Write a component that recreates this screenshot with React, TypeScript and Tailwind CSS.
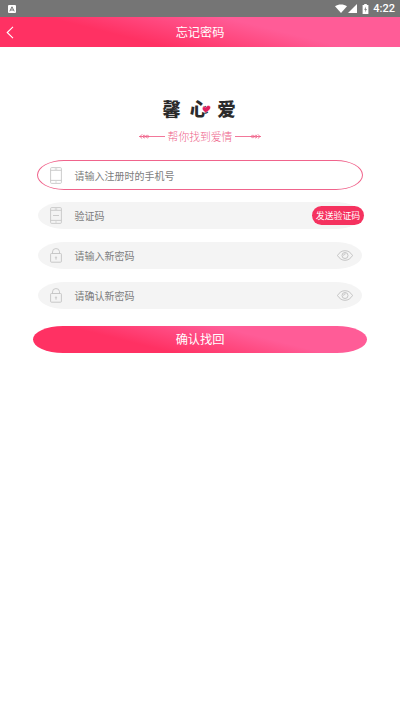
import type { ReactNode } from "react";

const gradient = "bg-[linear-gradient(14deg,#ff3163_32%,#ff5c97_66%)]";

function StatusBar() {
  return (
    <div className="h-[17px] bg-[#757575] flex items-center justify-between pl-2 pr-[5px] text-white">
      <svg width="8" height="8" viewBox="0 0 8 8">
        <rect width="8" height="8" rx="1" fill="#fff" />
        <path d="M1.8 6.3 4 1.8l2.2 4.5M2.8 5h2.4" fill="none" stroke="#757575" strokeWidth="1" />
      </svg>
      <div className="flex items-center">
        <svg width="12" height="9" viewBox="0 0 12 10" fill="#fff" preserveAspectRatio="none">
          <path d="M0 2.6C3.4-.2 8.6-.2 12 2.6L6 10Z" />
        </svg>
        <svg className="ml-px" width="9" height="9" viewBox="0 0 9 9" fill="#fff">
          <path d="M9 0V9H0Z" />
        </svg>
        <svg className="ml-[5px]" width="7" height="10" viewBox="0 0 7 10">
          <path d="M2.2 0h2.6v1H6.4v9H.6V1h1.6Z" fill="#fff" />
          <path d="M4 2.4 2.2 5.8h1.3L3 8.4l1.9-3.5H3.7Z" fill="#757575" />
        </svg>
        <span className="ml-[4px] font-[Roboto] font-medium text-[11px] leading-[17px]">4:22</span>
      </div>
    </div>
  );
}

function Header() {
  return (
    <header className={`h-[30px] grid grid-cols-[1fr_auto_1fr] items-center text-white ${gradient}`}>
      <button className="pl-[6px]">
        <svg width="8" height="13" viewBox="0 0 8 13" fill="none" stroke="#fff" strokeWidth="1.1">
          <path d="M7 .8 1.2 6.5 7 12.2" />
        </svg>
      </button>
      <h1 className="text-[12.2px] leading-[18px]">忘记密码</h1>
    </header>
  );
}

function Arrow({ flip }: { flip?: boolean }) {
  return (
    <svg className={flip ? "-scale-x-100" : ""} width="26" height="6" viewBox="0 0 26 6" fill="none" stroke="#ef5580" strokeWidth="0.8">
      <path d="M0 3.5h26" />
      <path d="M3.2 1.3 1 3.500l2.200 2.100M6.800 3.500 5.200 1.900 3.600 3.500l1.600 1.600ZM10 3.500 8.400 1.900 6.800 3.500l1.600 1.600Z" />
    </svg>
  );
}

function Brand() {
  return (
    <div className="flex flex-col items-center pt-[50px]">
      <div className="-ml-[2px] flex items-center gap-[9px] text-[18.5px] leading-[22px] font-black text-[#2b2b2b]">
        <span>馨</span>
        <span className="relative">
          心
          <svg className="absolute left-[12px] top-[8px]" width="9" height="8" viewBox="0 0 9 8">
            <path
              d="M3.6 7.6C1.4 6.3.1 4.7.4 3.1.7 1.5 2.7 1 3.9 2.4 4.5.6 6.6-.1 7.9 1.1 9.8 3 7.1 6 3.6 7.6Z"
              fill="#e0205f"
              stroke="#fff"
              strokeWidth="0.4"
            />
          </svg>
        </span>
        <span>爱</span>
      </div>
      <div className="mt-[9px] flex items-center gap-[3px] text-[#ee5f88] font-light text-[10.8px] leading-[16px]">
        <Arrow />
        <span>帮你找到爱情</span>
        <Arrow flip />
      </div>
    </div>
  );
}

function PhoneIcon({ dash }: { dash?: boolean }) {
  return (
    <svg width="12" height="17" viewBox="0 0 12 17" fill="none" stroke="#c6c6c6" strokeWidth="0.9">
      <rect x=".6" y=".6" width="10.8" height="15.8" rx="1" />
      <path d="M.6 3.3h10.8M.6 13.4h10.8M4.8 2h2.4M5.3 15h1.4" />
      {dash && <path d="M3 8.5h6" />}
    </svg>
  );
}

function LockIcon() {
  return (
    <svg width="12" height="15" viewBox="0 0 12 15" fill="none" stroke="#c3c3c3" strokeWidth="0.9">
      <rect x=".6" y="5.5" width="10.8" height="8.7" rx=".8" />
      <path d="M2.500 5.500V4a3.500 3.300 0 0 1 7-.3v1.800M6 10v1.700" />
      <circle cx="6" cy="9.4" r=".6" />
    </svg>
  );
}

function EyeIcon() {
  return (
    <svg width="16" height="11" viewBox="0 0 16 11" fill="none" stroke="#b9b9b9" strokeWidth="0.8">
      <path d="M.5 5.5C2.5 2.2 5 .7 8 .7s5.500 1.500 7.500 4.800C13.500 8.800 11 10.300 8 10.300S2.500 8.800.5 5.500Z" />
      <circle cx="8" cy="5.500" r="3" />
      <path d="M8.600 3.800a1.900 1.900 0 0 0-2 1.900" />
    </svg>
  );
}

function Field({ icon, label, children }: { icon: ReactNode; label: string; children?: ReactNode }) {
  return (
    <div className="h-[27px] mx-[38px] rounded-[27px/13.5px] bg-[#f4f4f4] flex items-center pl-[11px]">
      <span className="w-[25.5px] pl-[0.5px]">{icon}</span>
      <span className="flex-1 text-[10px] leading-[15px] text-[#7d7d7d]">{label}</span>
      {children}
    </div>
  );
}

export default function App() {
  return (
    <div className="min-h-screen bg-white font-['Noto_Sans_CJK_SC',sans-serif]">
      <StatusBar />
      <Header />
      <Brand />
      <main className="pt-4 flex flex-col">
        <div className="h-[30px] mx-[37px] rounded-[27px/15px] border border-[#f0648c] bg-white flex items-center pl-[11px]">
          <span className="w-[25.5px] pl-[0.5px]">
            <PhoneIcon />
          </span>
          <span className="text-[10px] leading-[15px] text-[#7d7d7d]">请输入注册时的手机号</span>
        </div>
        <div className="mt-3 flex flex-col gap-[13px]">
          <Field icon={<PhoneIcon dash />} label="验证码">
            <button className="-mr-[2px] w-[52px] h-[19px] rounded-full bg-[#f5325f] text-white text-[8.900px] leading-[19px] whitespace-nowrap">
              发送验证码
            </button>
          </Field>
          <Field icon={<LockIcon />} label="请输入新密码">
            <span className="pr-[9px]">
              <EyeIcon />
            </span>
          </Field>
          <Field icon={<LockIcon />} label="请确认新密码">
            <span className="pr-[9px]">
              <EyeIcon />
            </span>
          </Field>
        </div>
        <button className={`mt-[16.5px] mx-[33px] h-[27px] rounded-[30px/13.5px] text-white text-[12.2px] leading-[18px] ${gradient}`}>
          确认找回
        </button>
      </main>
    </div>
  );
}
